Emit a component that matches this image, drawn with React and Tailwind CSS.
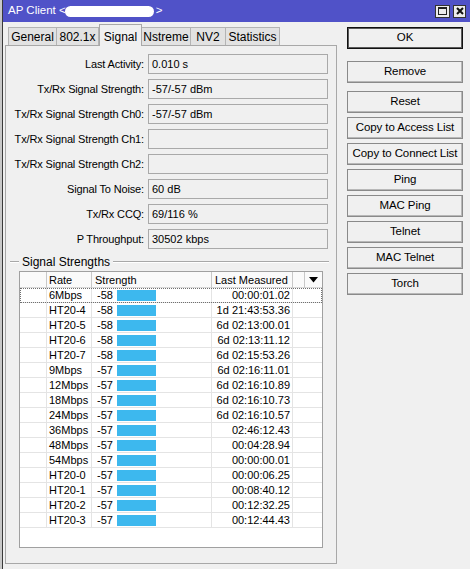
import React from "react";

const FIELDS = [
  ["Last Activity:", "0.010 s"],
  ["Tx/Rx Signal Strength:", "-57/-57 dBm"],
  ["Tx/Rx Signal Strength Ch0:", "-57/-57 dBm"],
  ["Tx/Rx Signal Strength Ch1:", ""],
  ["Tx/Rx Signal Strength Ch2:", ""],
  ["Signal To Noise:", "60 dB"],
  ["Tx/Rx CCQ:", "69/116 %"],
  ["P Throughput:", "30502 kbps"],
];

const ROWS = [
  ["6Mbps", "-58", "00:00:01.02"],
  ["HT20-4", "-58", "1d 21:43:53.36"],
  ["HT20-5", "-58", "6d 02:13:00.01"],
  ["HT20-6", "-58", "6d 02:13:11.12"],
  ["HT20-7", "-58", "6d 02:15:53.26"],
  ["9Mbps", "-57", "6d 02:16:11.01"],
  ["12Mbps", "-57", "6d 02:16:10.89"],
  ["18Mbps", "-57", "6d 02:16:10.73"],
  ["24Mbps", "-57", "6d 02:16:10.57"],
  ["36Mbps", "-57", "02:46:12.43"],
  ["48Mbps", "-57", "00:04:28.94"],
  ["54Mbps", "-57", "00:00:00.01"],
  ["HT20-0", "-57", "00:00:06.25"],
  ["HT20-1", "-57", "00:08:40.12"],
  ["HT20-2", "-57", "00:12:32.25"],
  ["HT20-3", "-57", "00:12:44.43"],
];

const TABS = [
  ["General", 49],
  ["802.1x", 42],
  ["Signal", 43],
  ["Nstreme", 49],
  ["NV2", 35],
  ["Statistics", 54],
];

const COLS = "grid grid-cols-[27px_45px_120px_81px_12px_17px]";

function Tab({ label, width, active }) {
  if (active) {
    return (
      <div
        style={{ width }}
        className="relative z-10 -mb-px flex h-[22px] items-start justify-center border border-b-0 border-[#a8a8a8] bg-[#f0f0f0] pt-[3px] text-[12px]"
      >
        {label}
      </div>
    );
  }
  return (
    <div
      style={{ width }}
      className="flex h-[18px] items-center justify-center border border-b-0 border-l-0 border-[#b4b4b4] bg-[#e2e2e2] text-[12px] first:border-l"
    >
      {label}
    </div>
  );
}

function Field({ label, value }) {
  return (
    <div className="flex h-[20px] items-center">
      <div className="w-[138px] text-right leading-none tracking-[-0.15px]">{label}</div>
      <div className="ml-[4px] flex h-[20px] w-[180px] items-center border border-[#a9a9a9] bg-[#f0f0f0] pl-[3px] leading-none">
        {value}
      </div>
    </div>
  );
}

function Button({ label, primary, className = "" }) {
  return (
    <div
      className={
        "flex h-[22px] w-[116px] items-center justify-center bg-[#f0f0f0] text-[11.5px] tracking-[-0.1px] " +
        (primary
          ? "border border-[#111] shadow-[inset_0_0_0_1px_#5a5a5a]"
          : "border border-[#8a8a8a] shadow-[inset_-1px_-1px_0_#b8b8b8]") +
        " " +
        className
      }
    >
      {label}
    </div>
  );
}

function StrengthTable() {
  return (
    <div className="ml-[13px] h-[277px] w-[304px] border border-[#a0a0a0] bg-white">
      <div className={COLS + " h-[16px] border-b border-[#d8d8d8] bg-[#fafafa] leading-[16px]"}>
        <div className="border-r border-[#c8c8c8]" />
        <div className="border-r border-[#c8c8c8] pl-[2px]">Rate</div>
        <div className="border-r border-[#c8c8c8] pl-[3px]">Strength</div>
        <div className="border-r border-[#c8c8c8] pl-[3px]">Last Measured</div>
        <div className="border-r border-[#c8c8c8]" />
        <div className="flex items-center justify-center">
          <svg width="9" height="6" viewBox="0 0 9 6">
            <path d="M0 0 H9 L4.5 5.5 Z" fill="#000" />
          </svg>
        </div>
      </div>
      {ROWS.map(([rate, val, time], i) => (
        <div
          key={rate}
          className={
            COLS +
            " h-[15px] leading-[14px] " +
            (i === 0 ? "outline outline-1 -outline-offset-1 outline-dotted outline-[#707070]" : "")
          }
        >
          <div className="border-r border-b border-[#e4e4e4]" />
          <div className="border-r border-b border-[#e4e4e4] pl-[2px]">{rate}</div>
          <div className="flex items-center border-r border-b border-[#e4e4e4] pl-[5px]">
            <span className="w-[20px]">{val}</span>
            <span className="h-[11px] w-[39px] bg-[#3db8ee]" />
          </div>
          <div className="border-r border-b border-[#e4e4e4] pr-[2px] text-right">{time}</div>
          <div className="border-b border-[#e4e4e4]" />
          <div className="border-b border-[#e4e4e4]" />
        </div>
      ))}
    </div>
  );
}

export default function App() {
  return (
    <div
      className="h-[569px] w-[470px] overflow-hidden border-l-2 border-[#c9c9c9] bg-[#f0f0f0] text-[11px] text-black"
      style={{ fontFamily: '"Liberation Sans", Arial, sans-serif' }}
    >
      <div className="h-full border-l border-[#3a3a3a]">
        {/* title bar */}
        <div className="flex h-[22px] items-center bg-[#5052c8] pl-[5px] pr-[4px] text-[11.5px] text-white">
          <span>AP Client &lt;</span>
          <span className="-ml-[1px] h-[11px] w-[89px] rounded-full bg-white" />
          <span className="ml-[2px]">&gt;</span>
          <div className="ml-auto flex items-center gap-[3px]">
            <div className="flex h-[13px] w-[15px] items-center justify-center border border-[#333] bg-[#ececec]">
              <div className="h-[8px] w-[9px] border border-[#222] border-t-2" />
            </div>
            <div className="flex h-[13px] w-[13px] items-center justify-center border border-[#333] bg-[#ececec]">
              <svg width="8" height="8" viewBox="0 0 8 8">
                <path d="M1 1 L7 7 M7 1 L1 7" stroke="#111" strokeWidth="2" />
              </svg>
            </div>
          </div>
        </div>

        <div className="flex">
          {/* left: tabs and panel */}
          <div className="ml-[2px] pt-[2px]">
            <div className="ml-[3px] flex h-[21px] items-end">
              {TABS.map(([t, w]) => (
                <Tab key={t} label={t} width={w} active={t === "Signal"} />
              ))}
            </div>
            <div className="h-[519px] w-[332px] border border-[#a8a8a8]">
              <div className="flex flex-col gap-[5px] pt-[8px]">
                {FIELDS.map(([l, v]) => (
                  <Field key={l} label={l} value={v} />
                ))}
              </div>
              <div className="mt-[6px] flex h-[14px] items-center pl-[4px] pr-[7px]">
                <div className="h-[2px] w-[9px] border-t border-[#a8a8a8] bg-white" />
                <span className="px-[3px] text-[12px] leading-none">Signal Strengths</span>
                <div className="h-[2px] flex-1 border-t border-[#a8a8a8] bg-white" />
              </div>
              <div className="mt-[2px]">
                <StrengthTable />
              </div>
            </div>
          </div>

          {/* right: action buttons */}
          <div className="ml-[10px] flex flex-col pt-[5px]">
            <Button label="OK" primary />
            <Button label="Remove" className="mt-[12px]" />
            <Button label="Reset" className="mt-[8px]" />
            <div className="mt-[4px] flex flex-col gap-[4px]">
              <Button label="Copy to Access List" />
              <Button label="Copy to Connect List" />
              <Button label="Ping" />
              <Button label="MAC Ping" />
              <Button label="Telnet" />
              <Button label="MAC Telnet" />
              <Button label="Torch" />
            </div>
          </div>
        </div>
      </div>
    </div>
  );
}
